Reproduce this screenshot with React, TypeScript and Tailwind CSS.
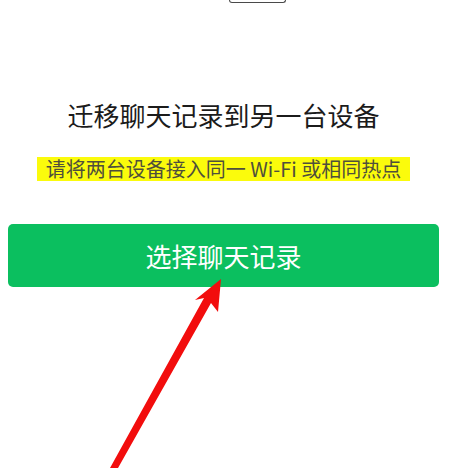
import React from "react";

const cjk = { fontFamily: '"Noto Sans CJK SC", "Noto Sans", sans-serif' };

// Red annotation arrow pointing up at the primary button.
function PointerArrow() {
  return (
    <svg
      className="pointer-events-none absolute left-0 top-0"
      width="453"
      height="468"
      viewBox="0 0 453 468"
    >
      <polygon
        points="221,279 218,312 211,303 118,468 110,468 204,298 195,300"
        fill="#f20d0d"
      />
    </svg>
  );
}

export default function App() {
  return (
    <div className="relative h-[468px] w-[453px] overflow-hidden bg-white" style={cjk}>
      {/* bottom edge of the device frame above */}
      <div className="ml-[229px] h-[3px] w-[57px] rounded-b-[4px] border border-t-0 border-[#4a4a4a]" />

      <div className="flex flex-col items-center pl-2 pr-[14px]">
        <h1 className="mt-[92px] text-[26px] leading-[40px] font-normal text-[#1b1b1b]">
          迁移聊天记录到另一台设备
        </h1>

        <p className="mt-[22px] bg-[#fbfb0c] px-[9px] text-[20px] leading-[24px] text-[#4f4f3c]">
          请将两台设备接入同一 Wi-Fi 或相同热点
        </p>

        <button className="mt-[43px] flex h-[63px] w-full items-center justify-center rounded-[5px] bg-[#0bbf5f] text-[26px] text-white">
          选择聊天记录
        </button>
      </div>

      <PointerArrow />
    </div>
  );
}
